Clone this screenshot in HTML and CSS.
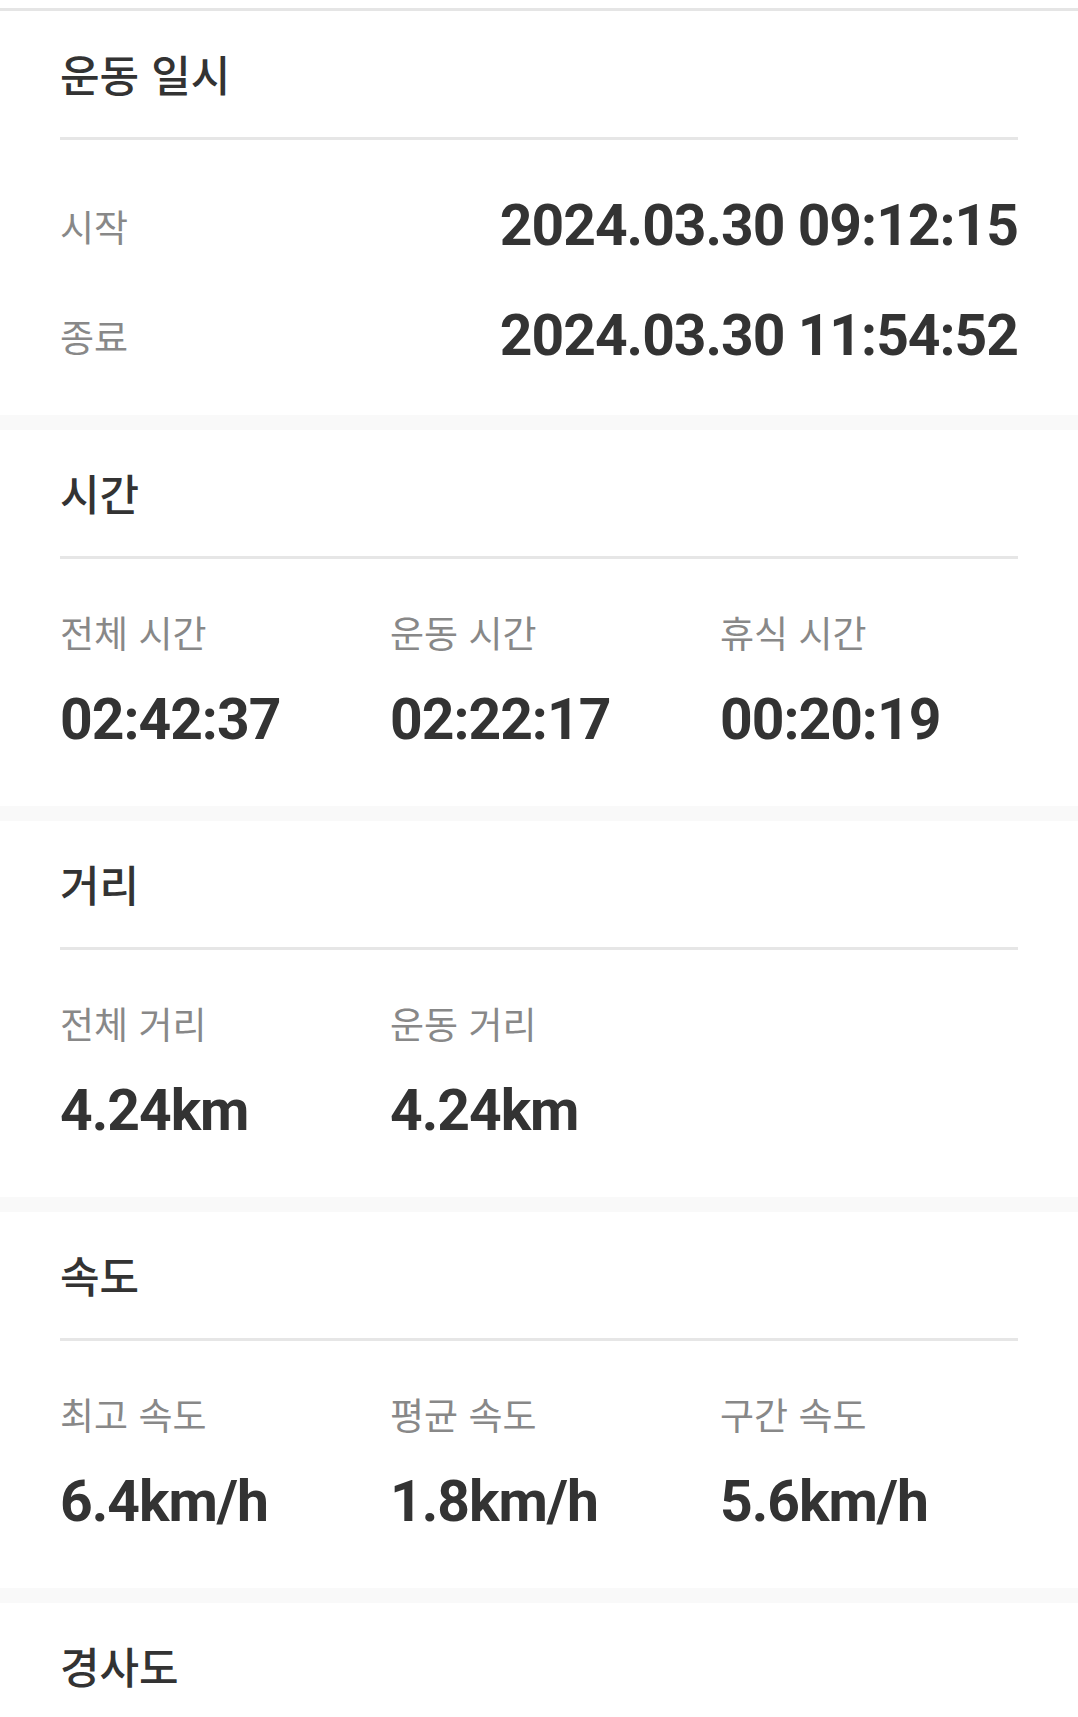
FILE: index.html
```html
<!DOCTYPE html>
<html lang="ko">
<head>
  <meta charset="UTF-8">
  <meta name="viewport" content="width=device-width, initial-scale=1.0">
  <title>운동 기록</title>
  <link rel="stylesheet" href="styles.css">
</head>
<body>
  <main class="record">
    <section class="card">
      <h2 class="card-title">운동 일시</h2>
      <div class="period">
        <div class="period-row">
          <span class="label">시작</span>
          <span class="value">2024.03.30 09:12:15</span>
        </div>
        <div class="period-row">
          <span class="label">종료</span>
          <span class="value">2024.03.30 11:54:52</span>
        </div>
      </div>
    </section>

    <section class="card">
      <h2 class="card-title">시간</h2>
      <div class="stats">
        <div class="stat">
          <span class="label">전체 시간</span>
          <span class="value">02:42:37</span>
        </div>
        <div class="stat">
          <span class="label">운동 시간</span>
          <span class="value">02:22:17</span>
        </div>
        <div class="stat">
          <span class="label">휴식 시간</span>
          <span class="value">00:20:19</span>
        </div>
      </div>
    </section>

    <section class="card">
      <h2 class="card-title">거리</h2>
      <div class="stats">
        <div class="stat">
          <span class="label">전체 거리</span>
          <span class="value">4.24km</span>
        </div>
        <div class="stat">
          <span class="label">운동 거리</span>
          <span class="value">4.24km</span>
        </div>
      </div>
    </section>

    <section class="card">
      <h2 class="card-title">속도</h2>
      <div class="stats">
        <div class="stat">
          <span class="label">최고 속도</span>
          <span class="value">6.4km/h</span>
        </div>
        <div class="stat">
          <span class="label">평균 속도</span>
          <span class="value">1.8km/h</span>
        </div>
        <div class="stat">
          <span class="label">구간 속도</span>
          <span class="value">5.6km/h</span>
        </div>
      </div>
    </section>

    <section class="card">
      <h2 class="card-title">경사도</h2>
    </section>
  </main>
</body>
</html>
```

FILE: styles.css
```css
body {
  margin: 0;
  background: #fff;
  font-family: "Noto Sans CJK KR", sans-serif;
  color: #333;
}

.record {
  margin-top: 8px;
  border-top: 3px solid #e5e5e5;
  display: flex;
  flex-direction: column;
  gap: 15px;
  background: #f9f9f9;
}

.card {
  background: #fff;
  padding: 0 60px;
}

.card-title {
  margin: 0;
  padding: 36px 0 38px;
  font-size: 43px;
  line-height: 52px;
  font-weight: 500;
  color: #333;
  border-bottom: 3px solid #e6e6e6;
}

.label {
  display: block;
  font-size: 37px;
  line-height: 44px;
  color: #888;
}

.value {
  display: block;
  font-family: Roboto, sans-serif;
  font-weight: 700;
  font-size: 57px;
  line-height: 60px;
  letter-spacing: -1px;
  color: #333;
}

/* start / end rows */
.period {
  display: flex;
  flex-direction: column;
  gap: 50px;
  padding: 56px 0 49px;
}

.period-row {
  display: flex;
  justify-content: space-between;
  align-items: center;
  height: 60px;
}

/* label over value columns */
.stats {
  display: grid;
  grid-template-columns: 330px 330px 1fr;
  padding: 51px 0 56px;
}

.stat .value {
  margin-top: 36px;
}
```
